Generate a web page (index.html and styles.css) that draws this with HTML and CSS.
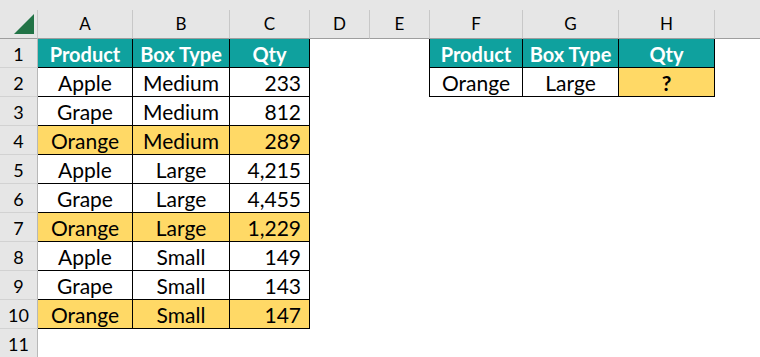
FILE: index.html
```html
<!DOCTYPE html>
<html>
<head>
<meta charset="utf-8">
<link rel="stylesheet" href="styles.css">
</head>
<body>
<div class="sheet">
  <div class="strip"></div>

  <div class="ch corner"><svg class="tri" width="37" height="28" viewBox="0 0 37 28"><polygon points="34,4 34,24 14,24" fill="#217346"/></svg></div>
  <div class="ch">A</div><div class="ch">B</div><div class="ch">C</div><div class="ch">D</div><div class="ch">E</div><div class="ch">F</div><div class="ch">G</div><div class="ch">H</div><div class="ch last"></div>

  <div class="rh">1</div>
  <div class="c t hd">Product</div><div class="c t hd">Box Type</div><div class="c t hd">Qty</div>
  <div class="c"></div><div class="c bl"></div>
  <div class="c t hd">Product</div><div class="c t hd">Box Type</div><div class="c t hd">Qty</div><div class="c"></div>

  <div class="rh">2</div>
  <div class="c t">Apple</div><div class="c t">Medium</div><div class="c t r">233</div>
  <div class="c"></div><div class="c bl"></div>
  <div class="c t">Orange</div><div class="c t">Large</div><div class="c t y b">?</div><div class="c"></div>

  <div class="rh">3</div>
  <div class="c t">Grape</div><div class="c t">Medium</div><div class="c t r">812</div>
  <div class="c"></div><div class="c"></div><div class="c"></div><div class="c"></div><div class="c"></div><div class="c"></div>

  <div class="rh">4</div>
  <div class="c t y">Orange</div><div class="c t y">Medium</div><div class="c t y r">289</div>
  <div class="c"></div><div class="c"></div><div class="c"></div><div class="c"></div><div class="c"></div><div class="c"></div>

  <div class="rh">5</div>
  <div class="c t">Apple</div><div class="c t">Large</div><div class="c t r">4,215</div>
  <div class="c"></div><div class="c"></div><div class="c"></div><div class="c"></div><div class="c"></div><div class="c"></div>

  <div class="rh">6</div>
  <div class="c t">Grape</div><div class="c t">Large</div><div class="c t r">4,455</div>
  <div class="c"></div><div class="c"></div><div class="c"></div><div class="c"></div><div class="c"></div><div class="c"></div>

  <div class="rh">7</div>
  <div class="c t y">Orange</div><div class="c t y">Large</div><div class="c t y r">1,229</div>
  <div class="c"></div><div class="c"></div><div class="c"></div><div class="c"></div><div class="c"></div><div class="c"></div>

  <div class="rh">8</div>
  <div class="c t">Apple</div><div class="c t">Small</div><div class="c t r">149</div>
  <div class="c"></div><div class="c"></div><div class="c"></div><div class="c"></div><div class="c"></div><div class="c"></div>

  <div class="rh">9</div>
  <div class="c t">Grape</div><div class="c t">Small</div><div class="c t r">143</div>
  <div class="c"></div><div class="c"></div><div class="c"></div><div class="c"></div><div class="c"></div><div class="c"></div>

  <div class="rh">10</div>
  <div class="c t y">Orange</div><div class="c t y">Small</div><div class="c t y r">147</div>
  <div class="c"></div><div class="c"></div><div class="c"></div><div class="c"></div><div class="c"></div><div class="c"></div>

  <div class="rh">11</div>
  <div class="c"></div><div class="c"></div><div class="c"></div><div class="c"></div><div class="c"></div><div class="c"></div><div class="c"></div><div class="c"></div><div class="c"></div>
</div>
</body>
</html>
```
FILE: styles.css
```css
* { box-sizing: border-box; }
html, body { margin: 0; padding: 0; background: #ffffff; }
body { width: 760px; height: 357px; overflow: hidden; font-family: Lato, "Open Sans", sans-serif; color: #000; }

.sheet {
  display: grid;
  grid-template-columns: 38px 95px 97px 80px 60px 60px 93px 96px 96px 1fr;
  grid-template-rows: 10px 29px repeat(11, 29px);
  width: 760px;
}

.strip { grid-column: 1 / -1; background: #e6e6e6; }

.ch {
  background: #e6e6e6;
  border-right: 1px solid #c8c8c8;
  border-bottom: 1px solid #9e9e9e;
  display: flex;
  align-items: flex-end;
  justify-content: center;
  padding-bottom: 4px;
  font-size: 17px;
  line-height: 20px;
}
.ch.last { border-right: none; }
.corner { position: relative; padding: 0; }
.tri { position: absolute; left: 0; top: 0; }

.rh {
  background: #e6e6e6;
  border-right: 1px solid #b8b8b8;
  border-bottom: 1px solid #d2d2d2;
  display: flex;
  align-items: center;
  justify-content: center;
  font-size: 18px;
  padding-top: 1px;
}

.c {
  display: flex;
  align-items: center;
  justify-content: center;
  font-size: 21px;
  white-space: nowrap;
  padding-top: 1px;
}
.t { border-right: 1px solid #000; border-bottom: 1px solid #000; }
.bl { border-right: 1px solid #000; }
.hd { background: #0fa19e; color: #fff; font-weight: 700; font-size: 20px; }
.y { background: #ffd966; }
.r { justify-content: flex-end; padding-right: 8px; }
.b { font-weight: 700; }
```
